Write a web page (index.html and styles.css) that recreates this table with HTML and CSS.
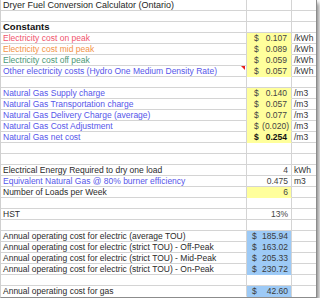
FILE: index.html
```html
<!DOCTYPE html>
<html lang="en">
<head>
  <meta charset="UTF-8">
  <title>Dryer Fuel Conversion Calculator (Ontario)</title>
  <link rel="stylesheet" href="styles.css">
</head>
<body>

  <!-- sheet -->
  <div class="sheet">
    <div class="row"><div class="c a title">Dryer Fuel Conversion Calculator (Ontario)</div><div class="c b"></div><div class="c u"></div></div>
    <div class="row"><div class="c a"></div><div class="c b"></div><div class="c u"></div></div>
    <div class="row"><div class="c a head">Constants</div><div class="c b"></div><div class="c u"></div></div>

    <div class="row"><div class="c a red">Electricity cost on peak</div><div class="c b money yellow"><span>$</span><span>0.107</span></div><div class="c u">/kWh</div></div>
    <div class="row"><div class="c a orange">Electricity cost mid peak</div><div class="c b money yellow"><span>$</span><span>0.089</span></div><div class="c u">/kWh</div></div>
    <div class="row"><div class="c a green">Electricity cost off peak</div><div class="c b money yellow"><span>$</span><span>0.059</span></div><div class="c u">/kWh</div></div>
    <div class="row"><div class="c a blue note">Other electricity costs (Hydro One Medium Density Rate)</div><div class="c b money yellow"><span>$</span><span>0.057</span></div><div class="c u">/kWh</div></div>
    <div class="row"><div class="c a"></div><div class="c b"></div><div class="c u"></div></div>

    <div class="row"><div class="c a blue">Natural Gas Supply charge</div><div class="c b money yellow"><span>$</span><span>0.140</span></div><div class="c u">/m3</div></div>
    <div class="row"><div class="c a blue">Natural Gas Transportation charge</div><div class="c b money yellow"><span>$</span><span>0.057</span></div><div class="c u">/m3</div></div>
    <div class="row"><div class="c a blue">Natural Gas Delivery Charge (average)</div><div class="c b money yellow"><span>$</span><span>0.077</span></div><div class="c u">/m3</div></div>
    <div class="row"><div class="c a blue">Natural Gas Cost Adjustment</div><div class="c b money yellow neg"><span>$</span><span>(0.020)</span></div><div class="c u">/m3</div></div>
    <div class="row"><div class="c a blue">Natural Gas net cost</div><div class="c b money yellow total"><span>$</span><span>0.254</span></div><div class="c u">/m3</div></div>
    <div class="row"><div class="c a"></div><div class="c b"></div><div class="c u"></div></div>
    <div class="row"><div class="c a"></div><div class="c b"></div><div class="c u"></div></div>

    <div class="row"><div class="c a">Electrical Energy Required to dry one load</div><div class="c b num">4</div><div class="c u">kWh</div></div>
    <div class="row"><div class="c a blue">Equivalent Natural Gas @ 80% burner efficiency</div><div class="c b num">0.475</div><div class="c u">m3</div></div>
    <div class="row"><div class="c a">Number of Loads per Week</div><div class="c b num yellow">6</div><div class="c u"></div></div>
    <div class="row"><div class="c a"></div><div class="c b"></div><div class="c u"></div></div>
    <div class="row"><div class="c a">HST</div><div class="c b num">13%</div><div class="c u"></div></div>
    <div class="row"><div class="c a"></div><div class="c b"></div><div class="c u"></div></div>

    <div class="row"><div class="c a">Annual operating cost for electric (average TOU)</div><div class="c b money cost"><span>$</span><span>185.94</span></div><div class="c u"></div></div>
    <div class="row"><div class="c a">Annual operating cost for electric (strict TOU) - Off-Peak</div><div class="c b money cost"><span>$</span><span>163.02</span></div><div class="c u"></div></div>
    <div class="row"><div class="c a">Annual operating cost for electric (strict TOU) - Mid-Peak</div><div class="c b money cost"><span>$</span><span>205.33</span></div><div class="c u"></div></div>
    <div class="row"><div class="c a">Annual operating cost for electric (strict TOU) - On-Peak</div><div class="c b money cost"><span>$</span><span>230.72</span></div><div class="c u"></div></div>
    <div class="row"><div class="c a"></div><div class="c b"></div><div class="c u"></div></div>
    <div class="row"><div class="c a">Annual operating cost for gas</div><div class="c b money cost"><span>$</span><span>42.60</span></div><div class="c u"></div></div>
  </div>

</body>
</html>
```

FILE: styles.css
```css
body {
  margin: 0;
  background: #ffffff;
  font-family: "Liberation Sans", Arial, sans-serif;
  font-size: 8.5px;
  color: #2a2a2a;
}

/* the sheet with its drop shadow */
.sheet {
  width: 315px;
  border-left: 1px solid #d0d0d0;
  border-right: 1px solid #8c8c8c;
  border-bottom: 1px solid #8c8c8c;
  box-shadow: 2px 3px 4px rgba(0, 0, 0, 0.45);
}

.row {
  display: grid;
  grid-template-columns: 246px 45px 1fr;
  height: 11px;
}

.c {
  box-sizing: border-box;
  height: 11px;
  line-height: 10px;
  border-bottom: 1px solid #d4d4d4;
  white-space: nowrap;
}

.row:last-child .c {
  border-bottom-color: transparent;
}

.a {
  position: relative;
  padding-left: 2px;
  border-right: 1px solid #d4d4d4;
}

.b {
  border-right: 1px solid #d4d4d4;
}

.u {
  padding-left: 2px;
  color: #333;
}

.title {
  font-size: 9px;
  color: #1e1e1e;
}

.head {
  font-weight: bold;
  font-size: 9.5px;
  color: #111;
}

/* row label colours */
.red { color: #f0536d; }
.orange { color: #f39347; }
.green { color: #4c9877; }
.blue { color: #5656ea; }

/* comment marker */
.note:after {
  content: "";
  position: absolute;
  right: 1px;
  top: 0;
  border-top: 4px solid #e8201c;
  border-left: 4px solid transparent;
}

/* values */
.money {
  display: flex;
  justify-content: space-between;
  padding: 0 4px 0 7px;
  color: #444;
}

.money.neg {
  padding-right: 2px;
}

.money.total {
  font-weight: bold;
  color: #111;
}

.num {
  text-align: right;
  padding-right: 3px;
  color: #444;
}

.yellow {
  background: #ffff9c;
  border-bottom-color: #ffff9c;
}

.cost {
  background: #9dcaf6;
  border-bottom-color: #9dcaf6;
  padding: 0 3px 0 5px;
  color: #3a3a3a;
}

.row:last-child .cost {
  border-bottom-color: #9dcaf6;
}
```
